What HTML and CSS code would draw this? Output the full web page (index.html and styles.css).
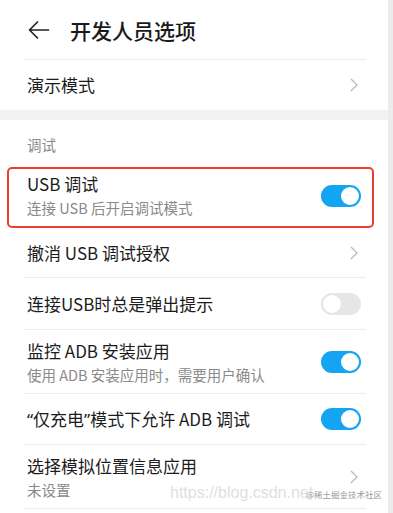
FILE: index.html
```html
<!DOCTYPE html>
<html lang="zh-CN">
<head>
<meta charset="utf-8">
<title>开发人员选项</title>
<link rel="stylesheet" href="styles.css">
</head>
<body>
<div class="page">
  <main class="content">
    <header class="header">
      <svg class="back" width="22" height="20" viewBox="0 0 22 20"><path d="M1.5 10 H20.5 M9.5 2 L1.5 10 L9.5 18" fill="none" stroke="#222" stroke-width="1.7" stroke-linecap="round" stroke-linejoin="round"/></svg>
      <h1 class="title">开发人员选项</h1>
    </header>
    <div class="divider"></div>

    <div class="row single">
      <span class="label">演示模式</span>
      <svg class="chev" width="8" height="14" viewBox="0 0 8 14"><path d="M1 1 L7 7 L1 13" fill="none" stroke="#b8b8b8" stroke-width="1.3"/></svg>
    </div>

    <div class="band"></div>

    <div class="section">调试</div>

    <div class="highlight">
      <div class="text">
        <span class="label">USB 调试</span>
        <span class="sub">连接 USB 后开启调试模式</span>
      </div>
      <span class="toggle on"></span>
    </div>

    <div class="row single tight">
      <span class="label">撤消 USB 调试授权</span>
      <svg class="chev" width="8" height="14" viewBox="0 0 8 14"><path d="M1 1 L7 7 L1 13" fill="none" stroke="#b8b8b8" stroke-width="1.3"/></svg>
    </div>
    <div class="divider"></div>

    <div class="row single mid">
      <span class="label">连接USB时总是弹出提示</span>
      <span class="toggle"></span>
    </div>
    <div class="divider"></div>

    <div class="row double">
      <div class="text">
        <span class="label">监控 ADB 安装应用</span>
        <span class="sub">使用 ADB 安装应用时，需要用户确认</span>
      </div>
      <span class="toggle on"></span>
    </div>
    <div class="divider"></div>

    <div class="row single">
      <span class="label"><span class="q">“</span>仅充电<span class="q">”</span>模式下允许 ADB 调试</span>
      <span class="toggle on"></span>
    </div>
    <div class="divider"></div>

    <div class="row double">
      <div class="text">
        <span class="label">选择模拟位置信息应用</span>
        <span class="sub">未设置</span>
      </div>
      <svg class="chev" width="8" height="14" viewBox="0 0 8 14"><path d="M1 1 L7 7 L1 13" fill="none" stroke="#b8b8b8" stroke-width="1.3"/></svg>
    </div>
    <div class="divider"></div>

    <div class="watermark">
      <span class="wm-url">https://blog.csdn.net</span>
      <span class="wm-tag">@稀土掘金技术社区</span>
    </div>
  </main>
  <div class="scrollbar"></div>
</div>
</body>
</html>
```

FILE: styles.css
```css
html, body {
  margin: 0;
  padding: 0;
  background: #ffffff;
}

body {
  font-family: "Noto Sans CJK SC", "Noto Sans", sans-serif;
  color: #1c1c1c;
  width: 393px;
  height: 513px;
  overflow: hidden;
}

.page {
  display: flex;
  height: 513px;
}

.content {
  position: relative;
  width: 388px;
  background: #ffffff;
  overflow: hidden;
}

.scrollbar {
  width: 5px;
  background: #ececec;
}

.header {
  height: 59px;
  display: flex;
  align-items: center;
  padding-left: 28px;
}

.back {
  display: block;
}

.title {
  margin: 0 0 0 20px;
  font-size: 21px;
  font-weight: 500;
  line-height: 28px;
  color: #1a1a1a;
}

.divider {
  height: 1px;
  background: #ececec;
  margin: 0 22px 0 24px;
}

.row {
  display: flex;
  align-items: center;
  justify-content: space-between;
  padding: 0 27px 0 27px;
}

.row.single {
  height: 50px;
}

.row.single.tight {
  height: 49px;
}

.row.single.mid {
  height: 51px;
}

.row.double {
  height: 63px;
}

.row .chev {
  margin-right: 3px;
}

.label {
  font-size: 17px;
  line-height: 22px;
  color: #1c1c1c;
}

.q {
  font-family: "Noto Sans", sans-serif;
}

.text {
  display: flex;
  flex-direction: column;
  gap: 3px;
}

.row.double .text {
  padding-top: 1px;
}

.sub {
  font-size: 14.5px;
  line-height: 20px;
  color: #8a8a8a;
}

.band {
  height: 10px;
  background: #f2f2f2;
}

.section {
  height: 47px;
  box-sizing: border-box;
  padding: 15px 0 0 27px;
  font-size: 14.5px;
  line-height: 20px;
  color: #8a8a8a;
}

.highlight {
  display: flex;
  align-items: center;
  justify-content: space-between;
  height: 61px;
  box-sizing: border-box;
  margin: 0 14px 0 7px;
  padding: 1px 11px 5px 18px;
  border: 2px solid #e8402c;
  border-radius: 5px;
}

.toggle {
  position: relative;
  display: block;
  width: 40px;
  height: 22px;
  border-radius: 11px;
  background: #e6e6e6;
  flex: none;
}

.toggle::after {
  content: "";
  position: absolute;
  top: 2px;
  left: 2px;
  width: 18px;
  height: 18px;
  border-radius: 50%;
  background: #ffffff;
}

.toggle.on {
  background: #13a4f2;
}

.toggle.on::after {
  left: 20px;
}

.watermark {
  position: absolute;
  left: 170px;
  top: 482px;
  width: 216px;
  height: 24px;
}

.wm-url {
  position: absolute;
  left: 0;
  top: 0;
  font-family: "Liberation Sans", sans-serif;
  font-size: 16px;
  line-height: 22px;
  color: rgba(190, 190, 190, 0.5);
  white-space: nowrap;
}

.wm-tag {
  position: absolute;
  left: 136px;
  top: 6px;
  font-size: 8.5px;
  line-height: 12px;
  color: #9a9a9a;
  white-space: nowrap;
}
```
